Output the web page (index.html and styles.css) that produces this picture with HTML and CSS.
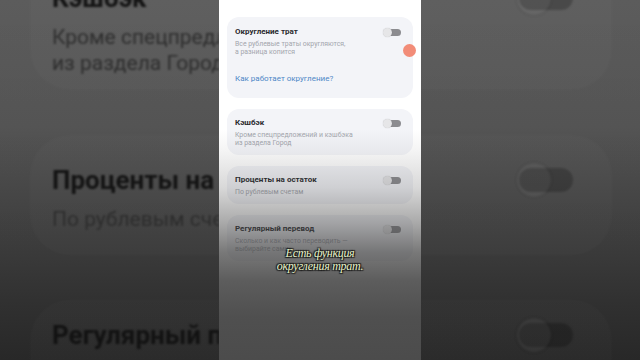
FILE: index.html
```html
<!DOCTYPE html>
<html lang="ru">
<head>
<meta charset="utf-8">
<title>Округление трат</title>
<link rel="stylesheet" href="styles.css">
</head>
<body>
<div class="frame">
  <div class="bg">
    <div class="bg-card bg-card-first">
      <div class="bg-row">
        <div class="bg-clip"><div class="bg-title">Кэшбэк</div></div>
        <span class="bg-toggle"><span class="bg-knob"></span></span>
      </div>
      <div class="bg-clip"><div class="bg-sub">Кроме спецпредложений и кэшбэка<br>из раздела Город</div></div>
    </div>
    <div class="bg-card bg-card-mid">
      <div class="bg-row">
        <div class="bg-clip"><div class="bg-title">Проценты на остаток</div></div>
        <span class="bg-toggle"><span class="bg-knob"></span></span>
      </div>
      <div class="bg-clip"><div class="bg-sub">По рублевым счетам</div></div>
    </div>
    <div class="bg-card bg-card-last">
      <div class="bg-row">
        <div class="bg-clip"><div class="bg-title">Регулярный перевод</div></div>
        <span class="bg-toggle"><span class="bg-knob"></span></span>
      </div>
    </div>
  </div>
  <div class="bg-shade"></div>

  <div class="phone">
    <div class="card card-first">
      <div class="row">
        <div class="title">Округление трат</div>
        <span class="toggle"><span class="knob"></span></span>
      </div>
      <div class="sub">Все рублевые траты округляются,<br>а разница копится</div>
      <div class="link">Как работает округление?</div>
    </div>
    <div class="card">
      <div class="row">
        <div class="title">Кэшбэк</div>
        <span class="toggle"><span class="knob"></span></span>
      </div>
      <div class="sub">Кроме спецпредложений и кэшбэка<br>из раздела Город</div>
    </div>
    <div class="card">
      <div class="row">
        <div class="title">Проценты на остаток</div>
        <span class="toggle"><span class="knob"></span></span>
      </div>
      <div class="sub">По рублевым счетам</div>
    </div>
    <div class="card">
      <div class="row">
        <div class="title">Регулярный перевод</div>
        <span class="toggle"><span class="knob"></span></span>
      </div>
      <div class="sub">Сколько и как часто переводить —<br>выбирайте сами</div>
    </div>
    <div class="phone-shade"></div>
    <span class="touch"></span>
  </div>

  <div class="caption">Есть функция<br>округления трат.</div>
</div>
</body>
</html>
```

FILE: styles.css
```css
* { box-sizing: border-box; }
html, body { margin: 0; padding: 0; }
body {
  width: 640px;
  height: 360px;
  overflow: hidden;
  background: #2e2e2e;
  font-family: Roboto, "Noto Sans", "Liberation Sans", sans-serif;
}
.frame {
  position: relative;
  width: 640px;
  height: 360px;
  overflow: hidden;
  background: linear-gradient(180deg, #5c5c5c 0%, #565656 35%, #454545 60%, #343434 85%, #2c2c2c 100%);
}

/* blurred background copy */
.bg {
  display: flex;
  flex-direction: column;
  gap: 45px;
  padding: 0 28px 0 30px;
  filter: blur(1px);
}
.bg-card {
  border-radius: 40px;
  background: rgba(255, 255, 255, 0.02);
  padding: 30px 39px 24px 22px;
}
.bg-card-first {
  margin-top: -40px;
  padding-top: 23px;
  padding-bottom: 14px;
  height: 130px;
}
.bg-card-mid { height: 120px; }
.bg-card-last { padding-top: 20px; height: 120px; }
.bg-row {
  display: flex;
  align-items: center;
  justify-content: space-between;
  height: 30px;
}
.bg-clip {
  width: 167px;
  overflow: hidden;
}
.bg-title {
  font-size: 26px;
  line-height: 30px;
  font-weight: 700;
  color: #141414;
  white-space: nowrap;
}
.bg-sub {
  margin-top: 11px;
  font-size: 21px;
  line-height: 26px;
  color: #2f2f2f;
  white-space: nowrap;
}
.bg-toggle {
  position: relative;
  width: 54px;
  height: 24px;
  border-radius: 12px;
  background: rgba(0, 0, 0, 0.22);
}
.bg-knob {
  position: absolute;
  left: -2px;
  top: -5px;
  width: 34px;
  height: 34px;
  border-radius: 50%;
  background: rgba(255, 255, 255, 0.05);
  box-shadow: 0 0 3px rgba(0,0,0,0.2);
}
.bg-shade {
  position: absolute;
  inset: 0;
  background: linear-gradient(180deg, rgba(0,0,0,0) 0%, rgba(0,0,0,0.04) 50%, rgba(0,0,0,0.1) 100%);
}

/* phone screenshot */
.phone {
  position: absolute;
  left: 219px;
  top: 0;
  width: 202px;
  height: 360px;
  background: #ffffff;
  padding: 17px 8px 0 8px;
  display: flex;
  flex-direction: column;
  gap: 11px;
  overflow: hidden;
}
.card {
  background: #f3f4f8;
  border-radius: 12px;
  padding: 9px 10px 8px 8px;
}
.card-first {
  padding-top: 10px;
  padding-bottom: 14px;
}
.row {
  display: flex;
  align-items: center;
  justify-content: space-between;
  height: 10px;
}
.title {
  font-size: 8px;
  line-height: 10px;
  font-weight: 700;
  color: #2a2a2e;
}
.sub {
  margin-top: 3px;
  font-size: 6.9px;
  line-height: 8px;
  color: #a3a6ad;
  white-space: nowrap;
}
.link {
  margin-top: 18px;
  font-size: 8px;
  line-height: 10px;
  color: #4d87c7;
}
.toggle {
  position: relative;
  width: 17px;
  height: 7px;
  border-radius: 4px;
  background: #8c8c90;
  margin-right: 2px;
}
.knob {
  position: absolute;
  left: -1px;
  top: -1px;
  width: 9px;
  height: 9px;
  border-radius: 50%;
  background: #e6e6e8;
  box-shadow: 0 0 1px rgba(0,0,0,0.25);
}
.phone-shade {
  position: absolute;
  inset: 0;
  background: linear-gradient(180deg,
    rgba(64,64,64,0) 0%,
    rgba(64,64,64,0) 36%,
    rgba(64,64,64,0.06) 42%,
    rgba(64,64,64,0.2) 52%,
    rgba(64,64,64,0.45) 62%,
    rgba(64,64,64,0.7) 70%,
    rgba(66,66,66,0.86) 78%,
    rgba(70,70,70,0.95) 88%,
    rgba(70,70,70,0.97) 100%);
}
.touch {
  position: absolute;
  left: 184px;
  top: 44px;
  width: 13px;
  height: 13px;
  border-radius: 50%;
  background: #f28c78;
}

.caption {
  position: absolute;
  left: 0;
  right: 0;
  top: 247px;
  text-align: center;
  font-family: "Liberation Serif", "DejaVu Serif", serif;
  font-style: italic;
  font-size: 12px;
  line-height: 13px;
  letter-spacing: -0.3px;
  color: #e8f5cc;
  text-shadow: 0 0 1px #1a1a1a, 1px 1px 1px #1a1a1a, -1px -1px 1px #1a1a1a, 1px -1px 1px #1a1a1a, -1px 1px 1px #1a1a1a;
}
```
